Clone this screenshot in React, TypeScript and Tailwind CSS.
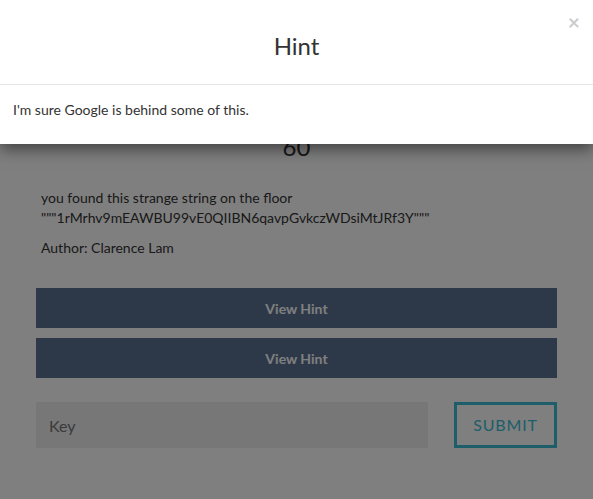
const font = { fontFamily: "Lato, 'Open Sans', sans-serif" };

function ChallengePage() {
  return (
    <div className="h-[499px] bg-white px-[36px] pt-[133px] text-[#333]">
      <h3 className="text-center text-[24px] leading-[28px]">60</h3>
      <div className="mt-[27px] px-[5px] text-[14px] leading-[20px]">
        <p>
          you found this strange string on the floor
          <br />
          """1rMrhv9mEAWBU99vE0QIIBN6qavpGvkczWDsiMtJRf3Y"""
        </p>
        <p className="mt-[10px]">Author: Clarence Lam</p>
      </div>
      <div className="mt-[30px] flex flex-col gap-[10px]">
        <button className="h-[40px] w-full bg-[#5a7292] text-[14px] font-bold text-white">View Hint</button>
        <button className="h-[40px] w-full bg-[#5a7292] text-[14px] font-bold text-white">View Hint</button>
      </div>
      <div className="mt-[24px] flex items-stretch justify-between">
        <input
          placeholder="Key"
          className="h-[46px] w-[392px] bg-[#eeeeee] px-[13px] text-[16px] placeholder:text-[#777]"
        />
        <button className="h-[46px] w-[103px] border-[3px] border-[#3cbcd4] text-[16px] tracking-[0.8px] text-[#3cbcd4]">
          SUBMIT
        </button>
      </div>
    </div>
  );
}

function HintModal() {
  return (
    <div className="absolute left-0 right-0 top-0 bg-white shadow-[0_5px_15px_rgba(0,0,0,0.5)]">
      <div className="relative flex h-[85px] items-center justify-center border-b border-[#e5e5e5] pt-[7px]">
        <h4 className="text-[24px] leading-[28px] text-[#333]">Hint</h4>
        <button className="absolute right-[13px] top-[8px] text-[21px] font-bold leading-[28px] text-black opacity-20">
          ×
        </button>
      </div>
      <div className="px-[13px] pb-[14px] pt-[15px] text-[14px] leading-[20px] text-[#333]">
        <p className="mb-[10px]">I'm sure Google is behind some of this.</p>
      </div>
    </div>
  );
}

export default function App() {
  return (
    <div className="relative h-[499px] w-full overflow-hidden" style={font}>
      <ChallengePage />
      <div className="absolute inset-0 bg-black/50" />
      <HintModal />
    </div>
  );
}
